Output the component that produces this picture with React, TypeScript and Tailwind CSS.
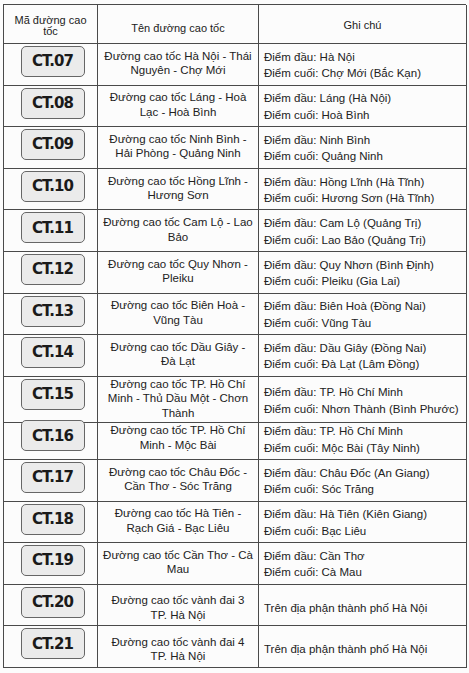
const rows: { code: string; name: string[]; note: string[] }[] = [
  { code: "CT.07", name: ["Đường cao tốc Hà Nội - Thái", "Nguyên - Chợ Mới"], note: ["Điểm đầu: Hà Nội", "Điểm cuối: Chợ Mới (Bắc Kạn)"] },
  { code: "CT.08", name: ["Đường cao tốc Láng - Hoà", "Lạc - Hoà Bình"], note: ["Điểm đầu: Láng (Hà Nội)", "Điểm cuối: Hoà Bình"] },
  { code: "CT.09", name: ["Đường cao tốc Ninh Bình -", "Hải Phòng - Quảng Ninh"], note: ["Điểm đầu: Ninh Bình", "Điểm cuối: Quảng Ninh"] },
  { code: "CT.10", name: ["Đường cao tốc Hồng Lĩnh -", "Hương Sơn"], note: ["Điểm đầu: Hồng Lĩnh (Hà Tĩnh)", "Điểm cuối: Hương Sơn (Hà Tĩnh)"] },
  { code: "CT.11", name: ["Đường cao tốc Cam Lộ - Lao", "Bảo"], note: ["Điểm đầu: Cam Lộ (Quảng Trị)", "Điểm cuối: Lao Bảo (Quảng Trị)"] },
  { code: "CT.12", name: ["Đường cao tốc Quy Nhơn -", "Pleiku"], note: ["Điểm đầu: Quy Nhơn (Bình Định)", "Điểm cuối: Pleiku (Gia Lai)"] },
  { code: "CT.13", name: ["Đường cao tốc Biên Hoà -", "Vũng Tàu"], note: ["Điểm đầu: Biên Hoà (Đồng Nai)", "Điểm cuối: Vũng Tàu"] },
  { code: "CT.14", name: ["Đường cao tốc Dầu Giây -", "Đà Lạt"], note: ["Điểm đầu: Dầu Giây (Đồng Nai)", "Điểm cuối: Đà Lạt (Lâm Đồng)"] },
  { code: "CT.15", name: ["Đường cao tốc TP. Hồ Chí", "Minh - Thủ Dầu Một - Chơn", "Thành"], note: ["Điểm đầu: TP. Hồ Chí Minh", "Điểm cuối: Nhơn Thành (Bình Phước)"] },
  { code: "CT.16", name: ["Đường cao tốc TP. Hồ Chí", "Minh - Mộc Bài"], note: ["Điểm đầu: TP. Hồ Chí Minh", "Điểm cuối: Mộc Bài (Tây Ninh)"] },
  { code: "CT.17", name: ["Đường cao tốc Châu Đốc -", "Cần Thơ - Sóc Trăng"], note: ["Điểm đầu: Châu Đốc (An Giang)", "Điểm cuối: Sóc Trăng"] },
  { code: "CT.18", name: ["Đường cao tốc Hà Tiên -", "Rạch Giá - Bạc Liêu"], note: ["Điểm đầu: Hà Tiên (Kiên Giang)", "Điểm cuối: Bạc Liêu"] },
  { code: "CT.19", name: ["Đường cao tốc Cần Thơ - Cà", "Mau"], note: ["Điểm đầu: Cần Thơ", "Điểm cuối: Cà Mau"] },
  { code: "CT.20", name: ["Đường cao tốc vành đai 3", "TP. Hà Nội"], note: ["Trên địa phận thành phố Hà Nội"] },
  { code: "CT.21", name: ["Đường cao tốc vành đai 4", "TP. Hà Nội"], note: ["Trên địa phận thành phố Hà Nội"] },
];

const cols = "grid grid-cols-[94px_161px_208px]";

export default function App() {
  return (
    <div className="min-h-[673px] w-[469px] bg-[#fcfcfc] pl-[3px] pt-[4px] text-[#222] [font-family:'Liberation_Sans',Arial,sans-serif]">
      <div className="w-[463px] border-l border-t border-[#4a4a4a]">
        {/* header */}
        <div className={`${cols} h-[39px] text-[11px]`}>
          <div className="flex items-center justify-center border-b border-r border-[#4a4a4a] pt-[4px] text-center leading-[11px]">
            Mã đường cao
            <br />
            tốc
          </div>
          <div className="flex items-center justify-center border-b border-r border-[#4a4a4a] pt-[8px]">
            Tên đường cao tốc
          </div>
          <div className="flex items-center justify-center border-b border-r border-[#4a4a4a] pt-[3px]">
            Ghi chú
          </div>
        </div>

        {rows.map((r) => {
          const single = r.note.length === 1;
          return (
            <div key={r.code} className={`${cols} h-[41.6px] text-[11.5px]`}>
              <div className="flex justify-center border-b border-r border-[#4a4a4a] pl-[4px] pt-[2px]">
                <div className="flex h-[31px] w-[64px] items-center justify-center rounded-[5px] border border-[#666] bg-[#ebebeb] text-[15px] font-bold tracking-[-0.06em] text-[#1a1a1a] [font-family:'DejaVu_Sans',Verdana,sans-serif]">
                  {r.code}
                </div>
              </div>
              <div
                className={`flex flex-col items-center justify-center border-b border-r border-[#4a4a4a] text-center leading-[14.5px] ${
                  single ? "pt-[5px]" : "pb-[2px]"
                }`}
              >
                {r.name.map((l) => (
                  <span key={l} className="whitespace-nowrap">
                    {l}
                  </span>
                ))}
              </div>
              <div
                className={`flex flex-col justify-center border-b border-r border-[#4a4a4a] pl-[5px] leading-[16.5px] ${
                  single ? "pt-[6px]" : "pt-[2px]"
                }`}
              >
                {r.note.map((l) => (
                  <span key={l} className="whitespace-nowrap">
                    {l}
                  </span>
                ))}
              </div>
            </div>
          );
        })}
      </div>
    </div>
  );
}
